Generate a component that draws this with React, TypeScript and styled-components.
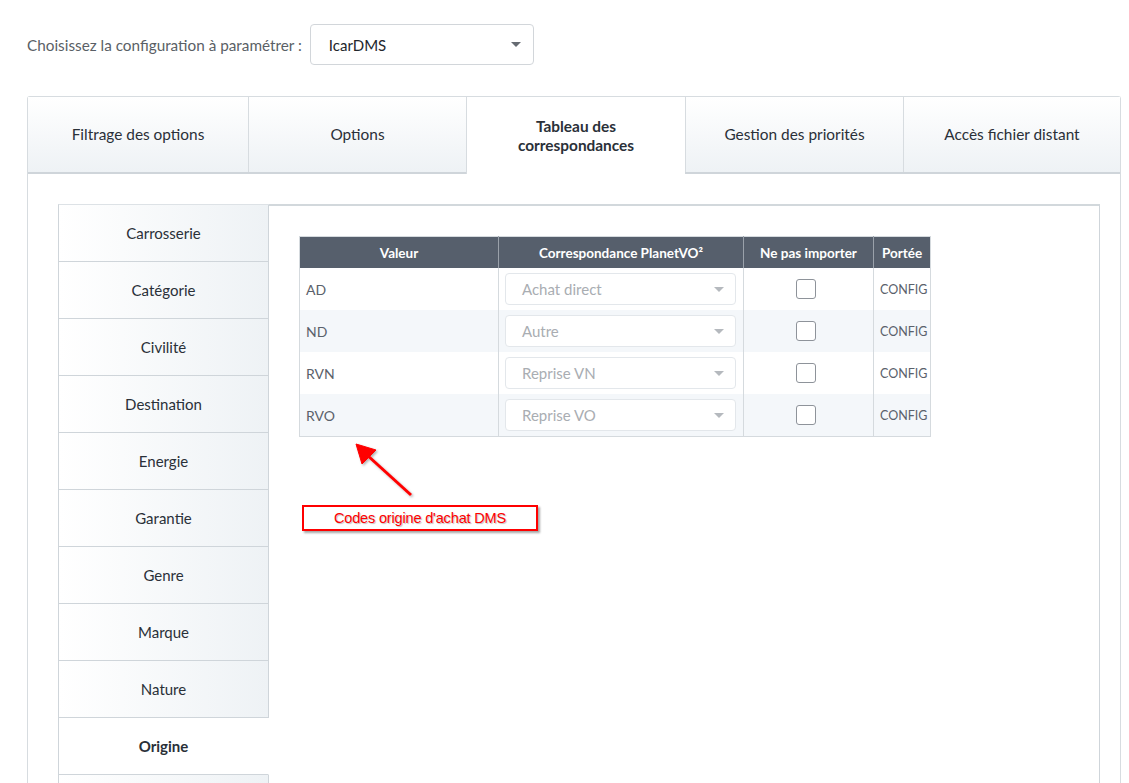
import React, { useState } from "react";
import styled, { createGlobalStyle } from "styled-components";

const GlobalStyle = createGlobalStyle`
  html, body {
    margin: 0;
    padding: 0;
    background: #fff;
    overflow: hidden;
  }
  body {
    font-family: Lato, "Open Sans", sans-serif;
    color: #333a44;
  }
`;

interface MappingRow {
  value: string;
  mapping: string;
  scope: string;
}

const rows: MappingRow[] = [
  { value: "AD", mapping: "Achat direct", scope: "CONFIG" },
  { value: "ND", mapping: "Autre", scope: "CONFIG" },
  { value: "RVN", mapping: "Reprise VN", scope: "CONFIG" },
  { value: "RVO", mapping: "Reprise VO", scope: "CONFIG" },
];

const topTabs = [
  "Filtrage des options",
  "Options",
  "Tableau des correspondances",
  "Gestion des priorités",
  "Accès fichier distant",
];

const sideItems = [
  "Carrosserie",
  "Catégorie",
  "Civilité",
  "Destination",
  "Energie",
  "Garantie",
  "Genre",
  "Marque",
  "Nature",
  "Origine",
  "Type",
];

const Page = styled.div`
  padding: 24px 8px 0 27px;
`;

const ConfigRow = styled.div`
  display: flex;
  align-items: center;
  gap: 8px;
`;

const ConfigLabel = styled.span`
  font-size: 15.3px;
  color: #5a5f66;
`;

const SelectBox = styled.div<{ $width: number; $height: number; $muted?: boolean }>`
  box-sizing: border-box;
  width: ${(p) => p.$width}px;
  height: ${(p) => p.$height}px;
  display: flex;
  align-items: center;
  justify-content: space-between;
  padding: 0 ${(p) => (p.$muted ? 11 : 12)}px 0 ${(p) => (p.$muted ? 16 : 18)}px;
  border: 1px solid ${(p) => (p.$muted ? "#e3e7eb" : "#d2d6da")};
  border-radius: 4px;
  background: #fff;
  font-size: 15px;
  color: ${(p) => (p.$muted ? "#a9adb2" : "#22262c")};
`;

const Caret = styled.span<{ $muted?: boolean }>`
  width: 0;
  height: 0;
  border-left: 5px solid transparent;
  border-right: 5px solid transparent;
  border-top: 5px solid ${(p) => (p.$muted ? "#b5b9be" : "#666b72")};
`;

const TabsPanel = styled.div`
  margin-top: 31px;
  width: 1094px;
  height: 720px;
  box-sizing: border-box;
  border: 1px solid #d7dce0;
  border-bottom: none;
  border-radius: 3px 3px 0 0;
`;

const TabBar = styled.div`
  display: grid;
  grid-template-columns: 220px 218px 219px 218px 1fr;
  height: 75px;
  border-bottom: 2px solid #cfd5da;
`;

const TopTab = styled.div<{ $active?: boolean }>`
  display: flex;
  align-items: center;
  justify-content: center;
  text-align: center;
  padding: 0 ${(p) => (p.$active ? 40 : 10)}px;
  white-space: ${(p) => (p.$active ? "normal" : "nowrap")};
  font-size: 15.4px;
  line-height: 19px;
  color: #2a3038;
  font-weight: ${(p) => (p.$active ? 700 : 400)};
  background: ${(p) =>
    p.$active ? "#fff" : "linear-gradient(to bottom, #ffffff, #eef2f5)"};
  border-left: 1px solid #d7dce0;
  margin-bottom: ${(p) => (p.$active ? "-2px" : "0")};
  &:first-child {
    border-left: none;
  }
`;

const TabBody = styled.div`
  display: flex;
  padding: 30px 20px 0 30px;
`;

const SideNav = styled.div`
  width: 211px;
  flex-shrink: 0;
  box-sizing: border-box;
  border-left: 1px solid #cfd5da;
  border-top: 1px solid #dde2e6;
`;

const SideItem = styled.div<{ $active?: boolean }>`
  height: 56px;
  display: flex;
  align-items: center;
  justify-content: center;
  font-size: 15px;
  color: #2a3038;
  font-weight: ${(p) => (p.$active ? 700 : 400)};
  border-bottom: 1px solid #cfd5da;
  border-right: 1px solid ${(p) => (p.$active ? "transparent" : "#cfd5da")};
  background: ${(p) =>
    p.$active ? "#fff" : "linear-gradient(to right, #ffffff, #eef2f5)"};
`;

const ContentPanel = styled.div`
  position: relative;
  flex: 1;
  border-top: 2px solid #d2d8dc;
  border-right: 1px solid #cfd5da;
  padding: 30px 0 0 30px;
`;

const MapTable = styled.table`
  border-collapse: collapse;
  table-layout: fixed;
  width: 631px;
  font-size: 14px;
  border: 1px solid #d5dade;
`;

const HeadCell = styled.th<{ $width: number }>`
  width: ${(p) => p.$width}px;
  height: 31px;
  padding: 0;
  background: #565f6c;
  color: #fff;
  font-size: 13.5px;
  font-weight: 700;
  text-align: center;
  white-space: nowrap;
  border-left: 1px solid #9aa1aa;
  &:first-child {
    border-left: none;
  }
`;

const BodyRow = styled.tr<{ $striped: boolean }>`
  background: ${(p) => (p.$striped ? "#f4f7fa" : "#fff")};
`;

const Cell = styled.td<{ $center?: boolean; $narrow?: boolean }>`
  height: 42px;
  padding: 0 ${(p) => (p.$narrow ? 0 : 6)}px 0 6px;
  color: #5a616b;
  font-size: ${(p) => (p.$narrow ? 12.5 : 14)}px;
  text-align: ${(p) => (p.$center ? "center" : "left")};
  border-left: 1px solid #d5dade;
  vertical-align: middle;
  white-space: nowrap;
  overflow: hidden;
  &:first-child {
    border-left: none;
  }
`;

const CheckBox = styled.span`
  display: inline-block;
  width: 20px;
  height: 20px;
  box-sizing: border-box;
  border: 1px solid #8e939a;
  border-radius: 3px;
  background: #fff;
  vertical-align: middle;
  margin-right: 5px;
`;

const Callout = styled.div`
  position: absolute;
  left: 33px;
  top: 299px;
  width: 236px;
  height: 26px;
  box-sizing: border-box;
  border: 2px solid #ff0000;
  display: flex;
  align-items: center;
  justify-content: center;
  font-family: "Liberation Sans", Arial, sans-serif;
  font-size: 14.6px;
  letter-spacing: -0.2px;
  color: #ff0000;
  background: #fff;
  box-shadow: 2px 2px 2px rgba(0, 0, 0, 0.35);
  text-shadow: 1px 1px 1px rgba(0, 0, 0, 0.25);
`;

const ArrowSvg = styled.svg`
  position: absolute;
  left: 76px;
  top: 232px;
  overflow: visible;
`;

const App: React.FC = () => {
  const [activeTab] = useState(2);
  const [activeSide] = useState(9);

  return (
    <>
      <GlobalStyle />
      <Page>
        <ConfigRow>
          <ConfigLabel>Choisissez la configuration à paramétrer :</ConfigLabel>
          <SelectBox $width={224} $height={41}>
            IcarDMS
            <Caret />
          </SelectBox>
        </ConfigRow>

        <TabsPanel>
          <TabBar>
            {topTabs.map((t, i) => (
              <TopTab key={t} $active={i === activeTab}>
                {t}
              </TopTab>
            ))}
          </TabBar>

          <TabBody>
            <SideNav>
              {sideItems.map((s, i) => (
                <SideItem key={s} $active={i === activeSide}>
                  {s}
                </SideItem>
              ))}
            </SideNav>

            <ContentPanel>
              <MapTable>
                <thead>
                  <tr>
                    <HeadCell $width={198}>Valeur</HeadCell>
                    <HeadCell $width={244}>Correspondance PlanetVO²</HeadCell>
                    <HeadCell $width={129}>Ne pas importer</HeadCell>
                    <HeadCell $width={56}>Portée</HeadCell>
                  </tr>
                </thead>
                <tbody>
                  {rows.map((r, i) => (
                    <BodyRow key={r.value} $striped={i % 2 === 1}>
                      <Cell>{r.value}</Cell>
                      <Cell>
                        <SelectBox $width={231} $height={32} $muted>
                          {r.mapping}
                          <Caret $muted />
                        </SelectBox>
                      </Cell>
                      <Cell $center>
                        <CheckBox />
                      </Cell>
                      <Cell $narrow>{r.scope}</Cell>
                    </BodyRow>
                  ))}
                </tbody>
              </MapTable>

              {/* annotation arrow pointing at the table */}
              <ArrowSvg width="70" height="60" viewBox="0 0 70 60">
                <defs>
                  <filter id="arrowShadow" x="-20%" y="-20%" width="150%" height="150%">
                    <feDropShadow dx="1.5" dy="1.5" stdDeviation="1" floodColor="#000" floodOpacity="0.3" />
                  </filter>
                </defs>
                <g filter="url(#arrowShadow)" fill="#ff0000" stroke="#ff0000">
                  <line x1="66" y1="57" x2="22" y2="17" strokeWidth="3" />
                  <polygon points="11,6 31,12 17,26" strokeWidth="1" />
                </g>
              </ArrowSvg>
              <Callout>Codes origine d'achat DMS</Callout>
            </ContentPanel>
          </TabBody>
        </TabsPanel>
      </Page>
    </>
  );
};

export default App;
